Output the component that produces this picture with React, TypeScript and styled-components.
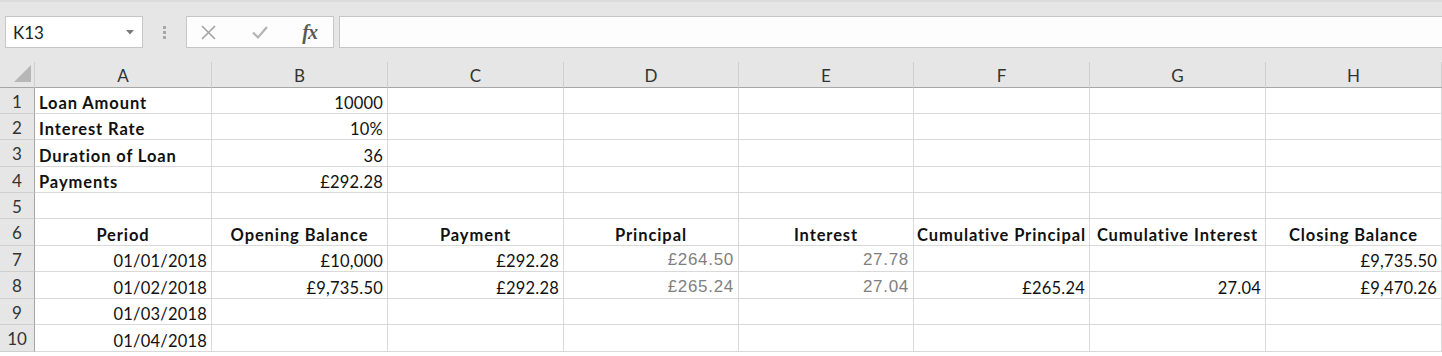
import styled, { createGlobalStyle } from 'styled-components';

const GlobalStyle = createGlobalStyle`
  html, body {
    margin: 0;
    padding: 0;
    background: #ffffff;
  }
  body {
    font-family: Lato, 'Liberation Sans', sans-serif;
    overflow: hidden;
  }
`;

const COLUMN_WIDTHS = [35, 177, 176, 176, 175, 175, 176, 176, 176];
const ROW_HEIGHTS = [26, 26, 26, 27, 26, 26, 27, 26, 27, 26, 27];
const COLUMN_LETTERS = ['A', 'B', 'C', 'D', 'E', 'F', 'G', 'H'];

type Align = 'left' | 'center' | 'right';
type CellData = { v: string; bold?: boolean; align?: Align; gray?: boolean };
type RowData = (CellData | null)[];

const label = (v: string): CellData => ({ v, bold: true, align: 'left' });
const head = (v: string): CellData => ({ v, bold: true, align: 'center' });
const num = (v: string): CellData => ({ v, align: 'right' });
const grey = (v: string): CellData => ({ v, align: 'right', gray: true });

const ROWS: RowData[] = [
  [label('Loan Amount'), num('10000'), null, null, null, null, null, null],
  [label('Interest Rate'), num('10%'), null, null, null, null, null, null],
  [label('Duration of Loan'), num('36'), null, null, null, null, null, null],
  [label('Payments'), num('£292.28'), null, null, null, null, null, null],
  [null, null, null, null, null, null, null, null],
  [
    head('Period'),
    head('Opening Balance'),
    head('Payment'),
    head('Principal'),
    head('Interest'),
    head('Cumulative Principal'),
    head('Cumulative Interest'),
    head('Closing Balance'),
  ],
  [num('01/01/2018'), num('£10,000'), num('£292.28'), grey('£264.50'), grey('27.78'), null, null, num('£9,735.50')],
  [
    num('01/02/2018'),
    num('£9,735.50'),
    num('£292.28'),
    grey('£265.24'),
    grey('27.04'),
    num('£265.24'),
    num('27.04'),
    num('£9,470.26'),
  ],
  [num('01/03/2018'), null, null, null, null, null, null, null],
  [num('01/04/2018'), null, null, null, null, null, null, null],
];

function App() {
  return (
    <>
      <GlobalStyle />
      <StyledWindow>
        <StyledFormulaBar>
          <StyledNameBox>
            <StyledNameText>K13</StyledNameText>
            <svg width="8" height="5" viewBox="0 0 8 5">
              <polygon points="0,0 8,0 4,4.5" fill="#7a7a7a" />
            </svg>
          </StyledNameBox>
          <StyledGrip>
            <span />
            <span />
            <span />
          </StyledGrip>
          <StyledFxBox>
            <svg width="17" height="17" viewBox="0 0 17 17">
              <path d="M2 2 L15 15 M15 2 L2 15" stroke="#a3a3a3" strokeWidth="1.6" fill="none" />
            </svg>
            <svg width="18" height="16" viewBox="0 0 18 16">
              <path d="M2 8.5 L7 13.5 L16 3" stroke="#b3b3b3" strokeWidth="2.2" fill="none" />
            </svg>
            <StyledFx>fx</StyledFx>
          </StyledFxBox>
          <StyledFormulaInput />
        </StyledFormulaBar>

        <StyledSheet>
          <StyledCorner>
            <svg width="18" height="18" viewBox="0 0 18 18">
              <polygon points="17,0 17,17 0,17" fill="#b7b7b7" />
            </svg>
          </StyledCorner>
          {COLUMN_LETTERS.map((letter) => (
            <StyledColumnHeader key={letter}>{letter}</StyledColumnHeader>
          ))}

          {ROWS.map((row, rowIndex) => [
            <StyledRowHeader key={`h${rowIndex}`}>{rowIndex + 1}</StyledRowHeader>,
            ...row.map((cell, colIndex) => (
              <StyledCell
                key={`${rowIndex}-${colIndex}`}
                $align={cell?.align ?? 'left'}
                $bold={!!cell?.bold}
                $gray={!!cell?.gray}
              >
                {cell?.v}
              </StyledCell>
            )),
          ])}
        </StyledSheet>
      </StyledWindow>
    </>
  );
}

const StyledWindow = styled.div`
  width: 1442px;
  height: 356px;
  overflow: hidden;
  background: #ffffff;
`;

const StyledFormulaBar = styled.div`
  display: flex;
  align-items: center;
  height: 62px;
  border-top: 2px solid #dcdcdc;
  background: #e6e6e6;
  padding: 0 0 0 5px;
  box-sizing: border-box;
`;

const StyledNameBox = styled.div`
  display: flex;
  align-items: center;
  justify-content: space-between;
  width: 138px;
  height: 32px;
  padding: 0 8px 0 7px;
  box-sizing: border-box;
  background: #ffffff;
  border: 1px solid #c6c6c6;
`;

const StyledNameText = styled.span`
  font-family: Lato, sans-serif;
  font-size: 17px;
  color: #222222;
`;

const StyledGrip = styled.div`
  display: flex;
  flex-direction: column;
  gap: 2px;
  margin: 0 20px 0 20px;

  span {
    display: block;
    width: 3px;
    height: 3px;
    background: #a8a8a8;
  }
`;

const StyledFxBox = styled.div`
  display: flex;
  align-items: center;
  justify-content: space-between;
  width: 148px;
  height: 32px;
  padding: 0 16px 0 13px;
  box-sizing: border-box;
  background: #fdfdfd;
  border: 1px solid #c6c6c6;
`;

const StyledFx = styled.span`
  font-family: 'Liberation Serif', serif;
  font-style: italic;
  font-weight: 700;
  font-size: 20px;
  color: #5a5a5a;
  letter-spacing: -1px;
`;

const StyledFormulaInput = styled.div`
  flex: 1;
  height: 32px;
  margin-left: 5px;
  box-sizing: border-box;
  background: #fdfdfd;
  border: 1px solid #c6c6c6;
  border-right: none;
`;

const StyledSheet = styled.div`
  display: grid;
  grid-template-columns: ${COLUMN_WIDTHS.map((w) => `${w}px`).join(' ')};
  grid-template-rows: ${ROW_HEIGHTS.map((h) => `${h}px`).join(' ')};
  background: #e6e6e6;
`;

const StyledCorner = styled.div`
  display: flex;
  align-items: flex-end;
  justify-content: flex-end;
  padding: 0 2px 4px 0;
  box-sizing: border-box;
  border-right: 1px solid #cfcfcf;
  border-bottom: 1px solid #a6a6a6;
`;

const StyledColumnHeader = styled.div`
  display: flex;
  align-items: center;
  justify-content: center;
  padding-top: 1px;
  box-sizing: border-box;
  font-size: 17px;
  color: #333333;
  border-right: 1px solid #cfcfcf;
  border-bottom: 1px solid #a6a6a6;
`;

const StyledRowHeader = styled.div`
  display: flex;
  align-items: center;
  justify-content: center;
  padding-top: 1px;
  font-size: 17px;
  color: #333333;
  box-sizing: border-box;
  border-right: 1px solid #a6a6a6;
  border-bottom: 1px solid #cfcfcf;
`;

type StyledCellProps = { $align: Align; $bold: boolean; $gray: boolean };

const StyledCell = styled.div<StyledCellProps>`
  display: flex;
  align-items: flex-end;
  justify-content: ${({ $align }) =>
    $align === 'right' ? 'flex-end' : $align === 'center' ? 'center' : 'flex-start'};
  padding: 0 4px 0 4px;
  box-sizing: border-box;
  background: #ffffff;
  border-right: 1px solid #d9d9d9;
  border-bottom: 1px solid #d9d9d9;
  white-space: nowrap;
  overflow: hidden;
  line-height: 1;
  padding-bottom: ${({ $gray }) => ($gray ? '3px' : '2px')};
  font-family: ${({ $gray }) => ($gray ? "'Liberation Sans', Arial, sans-serif" : 'Lato, sans-serif')};
  font-size: ${({ $gray }) => ($gray ? '17px' : '16.5px')};
  letter-spacing: ${({ $gray, $bold }) => ($gray ? '0.7px' : $bold ? '0.9px' : '0.2px')};
  font-weight: ${({ $bold }) => ($bold ? 700 : 400)};
  color: ${({ $gray }) => ($gray ? '#7f7f7f' : '#111111')};
`;

export default App;
